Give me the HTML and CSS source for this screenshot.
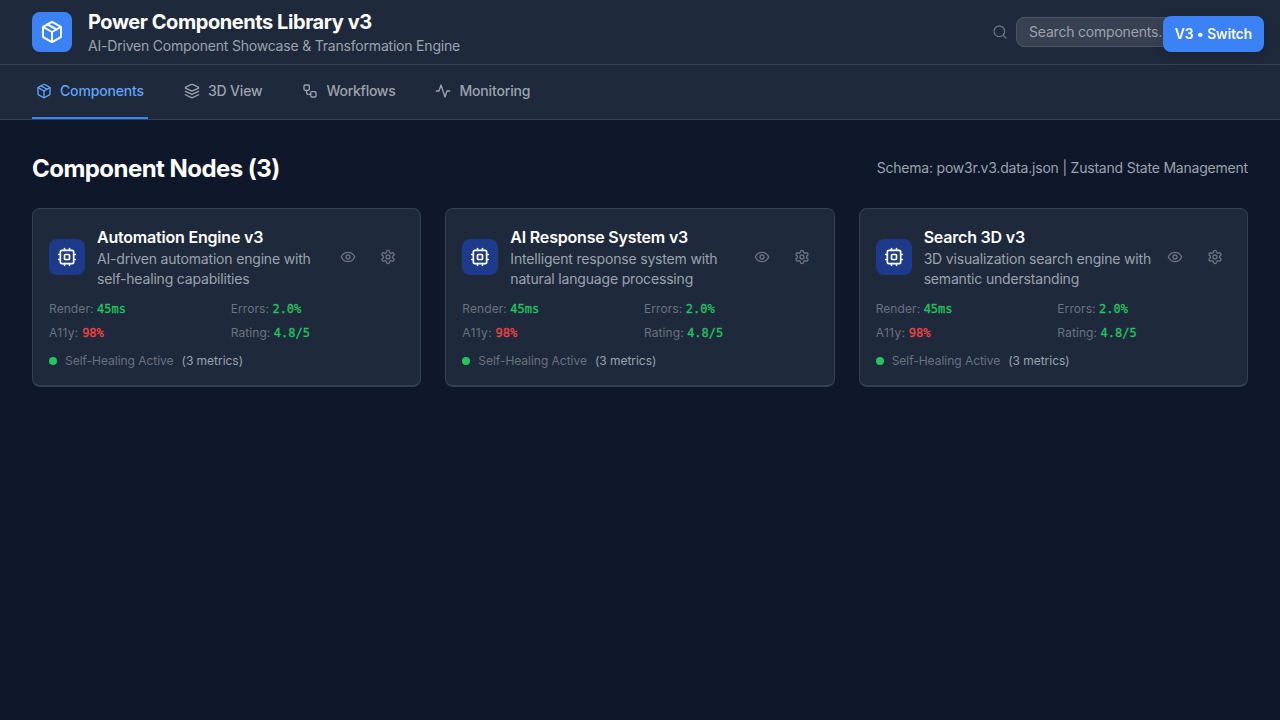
FILE: index.html
```html
<!DOCTYPE html>
<html lang="en">
<head>
<meta charset="utf-8">
<title>Power Components Library v3</title>
<link rel="stylesheet" href="styles.css">
</head>
<body>
<svg class="defs" aria-hidden="true">
  <symbol id="package" viewBox="0 0 24 24"><path d="m7.5 4.27 9 5.15"/><path d="M21 8a2 2 0 0 0-1-1.73l-7-4a2 2 0 0 0-2 0l-7 4A2 2 0 0 0 3 8v8a2 2 0 0 0 1 1.73l7 4a2 2 0 0 0 2 0l7-4A2 2 0 0 0 21 16Z"/><path d="m3.3 7 8.7 5 8.7-5"/><path d="M12 22V12"/></symbol>
  <symbol id="layers" viewBox="0 0 24 24"><path d="m12.83 2.18a2 2 0 0 0-1.66 0L2.6 6.08a1 1 0 0 0 0 1.83l8.58 3.91a2 2 0 0 0 1.66 0l8.58-3.9a1 1 0 0 0 0-1.83Z"/><path d="m22 17.65-9.17 4.16a2 2 0 0 1-1.66 0L2 17.65"/><path d="m22 12.65-9.17 4.16a2 2 0 0 1-1.66 0L2 12.65"/></symbol>
  <symbol id="workflow" viewBox="0 0 24 24"><rect width="8" height="8" x="3" y="3" rx="2"/><path d="M7 11v4a2 2 0 0 0 2 2h4"/><rect width="8" height="8" x="13" y="13" rx="2"/></symbol>
  <symbol id="activity" viewBox="0 0 24 24"><path d="M22 12h-4l-3 9L9 3l-3 9H2"/></symbol>
  <symbol id="search" viewBox="0 0 24 24"><circle cx="11" cy="11" r="8"/><path d="m21 21-4.3-4.3"/></symbol>
  <symbol id="cpu" viewBox="0 0 24 24"><rect width="16" height="16" x="4" y="4" rx="2"/><rect width="6" height="6" x="9" y="9" rx="1"/><path d="M15 2v2M15 20v2M2 15h2M2 9h2M20 15h2M20 9h2M9 2v2M9 20v2"/></symbol>
  <symbol id="eye" viewBox="0 0 24 24"><path d="M2 12s3-7 10-7 10 7 10 7-3 7-10 7-10-7-10-7Z"/><circle cx="12" cy="12" r="3"/></symbol>
  <symbol id="settings" viewBox="0 0 24 24"><path d="M12.22 2h-.44a2 2 0 0 0-2 2v.18a2 2 0 0 1-1 1.73l-.43.25a2 2 0 0 1-2 0l-.15-.08a2 2 0 0 0-2.73.73l-.22.38a2 2 0 0 0 .73 2.73l.15.1a2 2 0 0 1 1 1.72v.51a2 2 0 0 1-1 1.74l-.15.09a2 2 0 0 0-.73 2.73l.22.38a2 2 0 0 0 2.73.73l.15-.08a2 2 0 0 1 2 0l.43.25a2 2 0 0 1 1 1.73V20a2 2 0 0 0 2 2h.44a2 2 0 0 0 2-2v-.18a2 2 0 0 1 1-1.73l.43-.25a2 2 0 0 1 2 0l.15.08a2 2 0 0 0 2.73-.73l.22-.39a2 2 0 0 0-.73-2.73l-.15-.08a2 2 0 0 1-1-1.74v-.5a2 2 0 0 1 1-1.74l.15-.09a2 2 0 0 0 .73-2.73l-.22-.38a2 2 0 0 0-2.73-.73l-.15.08a2 2 0 0 1-2 0l-.43-.25a2 2 0 0 1-1-1.73V4a2 2 0 0 0-2-2z"/><circle cx="12" cy="12" r="3"/></symbol>
</svg>
<header class="header">
  <div class="brand">
    <div class="logo"><svg class="icon icon-lg"><use href="#package"/></svg></div>
    <div>
      <h1 class="title">Power Components Library v3</h1>
      <p class="subtitle">AI-Driven Component Showcase &amp; Transformation Engine</p>
    </div>
  </div>
  <div class="search">
    <svg class="icon"><use href="#search"/></svg>
    <input class="search-input" type="text" placeholder="Search components...">
  </div>
</header>
<button class="switch">V3 • Switch</button>
<nav class="tabs">
  <a class="tab tab-active"><svg class="icon"><use href="#package"/></svg><span>Components</span></a>
  <a class="tab"><svg class="icon"><use href="#layers"/></svg><span>3D View</span></a>
  <a class="tab"><svg class="icon"><use href="#workflow"/></svg><span class="tight">Workflows</span></a>
  <a class="tab"><svg class="icon"><use href="#activity"/></svg><span>Monitoring</span></a>
</nav>
<main class="main">
  <div class="section-head">
    <h2 class="section-title">Component Nodes (3)</h2>
    <p class="schema">Schema: pow3r.v3.data.json | Zustand State Management</p>
  </div>
  <div class="grid">
    <article class="card">
      <div class="card-head">
        <div class="card-icon"><svg class="icon icon-md"><use href="#cpu"/></svg></div>
        <div class="card-text"><h3 class="card-title">Automation Engine v3</h3><p class="card-desc">AI-driven automation engine with<br>self-healing capabilities</p></div>
        <div class="actions"><svg class="icon"><use href="#eye"/></svg><svg class="icon"><use href="#settings"/></svg></div>
      </div>
      <div class="metrics">
        <div>Render: <b class="value">45ms</b></div><div>Errors: <b class="value">2.0%</b></div>
        <div><span class="wide">A11y:</span> <b class="value bad">98%</b></div><div>Rating: <b class="value">4.8/5</b></div>
      </div>
      <div class="health"><i class="dot"></i><span>Self-Healing Active</span><span class="count">(3 metrics)</span></div>
    </article>
    <article class="card">
      <div class="card-head">
        <div class="card-icon"><svg class="icon icon-md"><use href="#cpu"/></svg></div>
        <div class="card-text"><h3 class="card-title">AI Response System v3</h3><p class="card-desc">Intelligent response system with<br>natural language processing</p></div>
        <div class="actions"><svg class="icon"><use href="#eye"/></svg><svg class="icon"><use href="#settings"/></svg></div>
      </div>
      <div class="metrics">
        <div>Render: <b class="value">45ms</b></div><div>Errors: <b class="value">2.0%</b></div>
        <div><span class="wide">A11y:</span> <b class="value bad">98%</b></div><div>Rating: <b class="value">4.8/5</b></div>
      </div>
      <div class="health"><i class="dot"></i><span>Self-Healing Active</span><span class="count">(3 metrics)</span></div>
    </article>
    <article class="card">
      <div class="card-head">
        <div class="card-icon"><svg class="icon icon-md"><use href="#cpu"/></svg></div>
        <div class="card-text"><h3 class="card-title">Search 3D v3</h3><p class="card-desc">3D visualization search engine with<br>semantic understanding</p></div>
        <div class="actions"><svg class="icon"><use href="#eye"/></svg><svg class="icon"><use href="#settings"/></svg></div>
      </div>
      <div class="metrics">
        <div>Render: <b class="value">45ms</b></div><div>Errors: <b class="value">2.0%</b></div>
        <div><span class="wide">A11y:</span> <b class="value bad">98%</b></div><div>Rating: <b class="value">4.8/5</b></div>
      </div>
      <div class="health"><i class="dot"></i><span>Self-Healing Active</span><span class="count">(3 metrics)</span></div>
    </article>
  </div>
</main>
</body>
</html>
```
FILE: styles.css
```css
* { box-sizing: border-box; margin: 0; }
body { min-height: 720px; background: #0f172a; color: #fff; font: 14px/20px Inter, "Liberation Sans", sans-serif; }
.defs { position: absolute; width: 0; height: 0; }
.icon { width: 16px; height: 16px; flex: none; display: block; fill: none; stroke: currentColor; stroke-width: 2; stroke-linecap: round; stroke-linejoin: round; }
.icon-md { width: 20px; height: 20px; }
.icon-lg { width: 24px; height: 24px; }
.header { display: flex; justify-content: space-between; align-items: center; height: 65px; padding: 0 32px; background: #1e293b; border-bottom: 1px solid #334155; }
.brand { display: flex; align-items: center; gap: 16px; }
.logo { display: grid; place-items: center; width: 40px; height: 40px; border-radius: 8px; background: #3b82f6; }
.title { font-size: 20px; line-height: 28px; font-weight: 700; letter-spacing: -0.43px; white-space: nowrap; }
.subtitle { color: #9ca3af; letter-spacing: -0.2px; white-space: nowrap; }
.search { display: flex; align-items: center; gap: 8px; color: #6b7280; }
.search-input { width: 232px; height: 30px; padding: 0 12px 2px; border: 1px solid #4b5563; border-radius: 8px; background: #374151; color: #fff; font: inherit; letter-spacing: -0.2px; }
.search-input::placeholder { color: #9ca3af; }
.switch { position: fixed; top: 16px; right: 16px; width: 101px; height: 36px; padding: 0; border: 0; border-radius: 8px; background: #3b82f6; color: #fff; font: 600 14px/20px Inter, sans-serif; letter-spacing: -0.15px; box-shadow: 0 4px 12px rgba(0, 0, 0, .15); }
.tabs { display: flex; gap: 32px; height: 55px; padding: 0 32px; background: #1e293b; border-bottom: 1px solid #334155; }
.tab { display: flex; align-items: center; gap: 8px; padding: 0 4px; border-bottom: 2px solid transparent; color: #9ca3af; font-weight: 500; letter-spacing: -0.16px; }
.tight { letter-spacing: -0.28px; }
.tab-active { color: #60a5fa; border-color: #3b82f6; }
.main { padding: 32px; }
.section-head { display: flex; justify-content: space-between; align-items: center; height: 32px; margin-bottom: 24px; }
.section-title { padding-top: 2px; font-size: 24px; line-height: 32px; font-weight: 700; letter-spacing: -0.54px; }
.schema { color: #9ca3af; letter-spacing: -0.21px; }
.grid { display: grid; grid-template-columns: repeat(3, minmax(0, 1fr)); gap: 24px; }
.card { height: 179px; padding: 16px; border: 1px solid #334155; border-bottom-width: 2px; border-radius: 8px; background: #1e293b; }
.card-head { display: flex; align-items: center; height: 64px; margin-bottom: 8px; }
.card-icon { display: grid; place-items: center; flex: none; width: 36px; height: 36px; margin-right: 12px; border-radius: 8px; background: #1e3a8a; }
.card-text { flex: 1; white-space: nowrap; }
.card-title { font-size: 16px; line-height: 24px; font-weight: 600; letter-spacing: -0.2px; }
.card-desc { color: #9ca3af; letter-spacing: -0.18px; }
.actions { display: flex; gap: 24px; padding: 0 8px; color: #6b7280; }
.metrics { display: grid; grid-template-columns: 1fr 1fr; gap: 8px; color: #6b7280; font-size: 12px; line-height: 16px; letter-spacing: 0.08px; padding-top: 4px; }
.wide { letter-spacing: 0.35px; }
.value { color: #22c55e; font: 500 12px/16px "DejaVu Sans Mono", monospace; letter-spacing: 0; -webkit-text-stroke: 0.3px currentColor; }
.bad { color: #ef4444; }
.health { display: flex; align-items: center; gap: 8px; margin-top: 12px; color: #6b7280; font-size: 12px; line-height: 16px; letter-spacing: -0.03px; }
.dot { width: 8px; height: 8px; border-radius: 50%; background: #22c55e; }
.count { color: #9ca3af; }
```
